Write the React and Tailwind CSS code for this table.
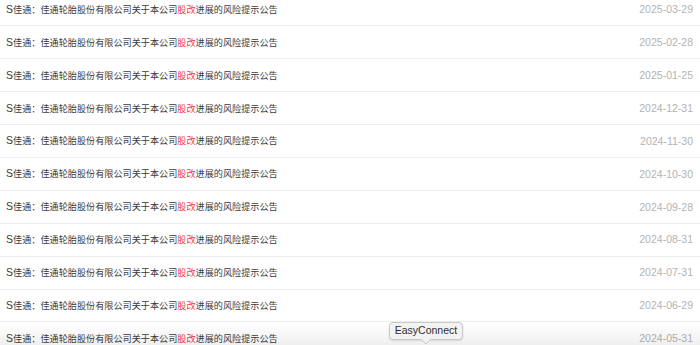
import React from 'react';

const dates = [
  '2025-03-29', '2025-02-28', '2025-01-25', '2024-12-31', '2024-11-30', '2024-10-30',
  '2024-09-28', '2024-08-31', '2024-07-31', '2024-06-29', '2024-05-31',
];

function NoticeRow({ date }) {
  return (
    <div className="h-[32.9px] flex items-center justify-between border-b border-[#eeeeee] pl-[6px] pr-[7px] shrink-0">
      <span className="text-[9.15px] leading-none text-[#3a3a3a] whitespace-nowrap">
        <span className="text-[10.5px]">S</span>佳通：佳通轮胎股份有限公司关于本公司<span className="text-[#f53a3a]">股改</span>进展的风险提示公告
      </span>
      <span className="text-[10.5px] leading-none text-[#b3b3b3]">{date}</span>
    </div>
  );
}

export default function App() {
  return (
    <div className="relative w-[700px] h-[345px] overflow-hidden bg-white font-['Liberation_Sans','Noto_Sans_CJK_SC',sans-serif]">
      <div className="flex flex-col -mt-[6.5px]">
        {dates.map((d) => (
          <NoticeRow key={d} date={d} />
        ))}
      </div>

      {/* dock shadow at the bottom */}
      <div className="absolute left-0 right-0 bottom-0 h-[22px] pointer-events-none bg-gradient-to-b from-transparent to-[#00000010]" />

      {/* tooltip */}
      <div className="absolute left-[389px] top-[322px] flex flex-col items-center">
        <div className="w-[74px] h-[18px] flex items-center justify-center rounded-[4px] border border-[#c9c9c9] bg-[#f3f3f3] shadow-[0_1px_2px_rgba(0,0,0,0.12)] text-[10.5px] text-[#2e2e2e]">
          EasyConnect
        </div>
        <svg width="10" height="5" viewBox="0 0 10 5" className="-mt-[1px]">
          <path d="M0 0 L5 5 L10 0" fill="#f3f3f3" stroke="#c9c9c9" strokeWidth="1" />
          <path d="M1 0 L9 0" stroke="#f3f3f3" strokeWidth="1.2" />
        </svg>
      </div>
    </div>
  );
}
